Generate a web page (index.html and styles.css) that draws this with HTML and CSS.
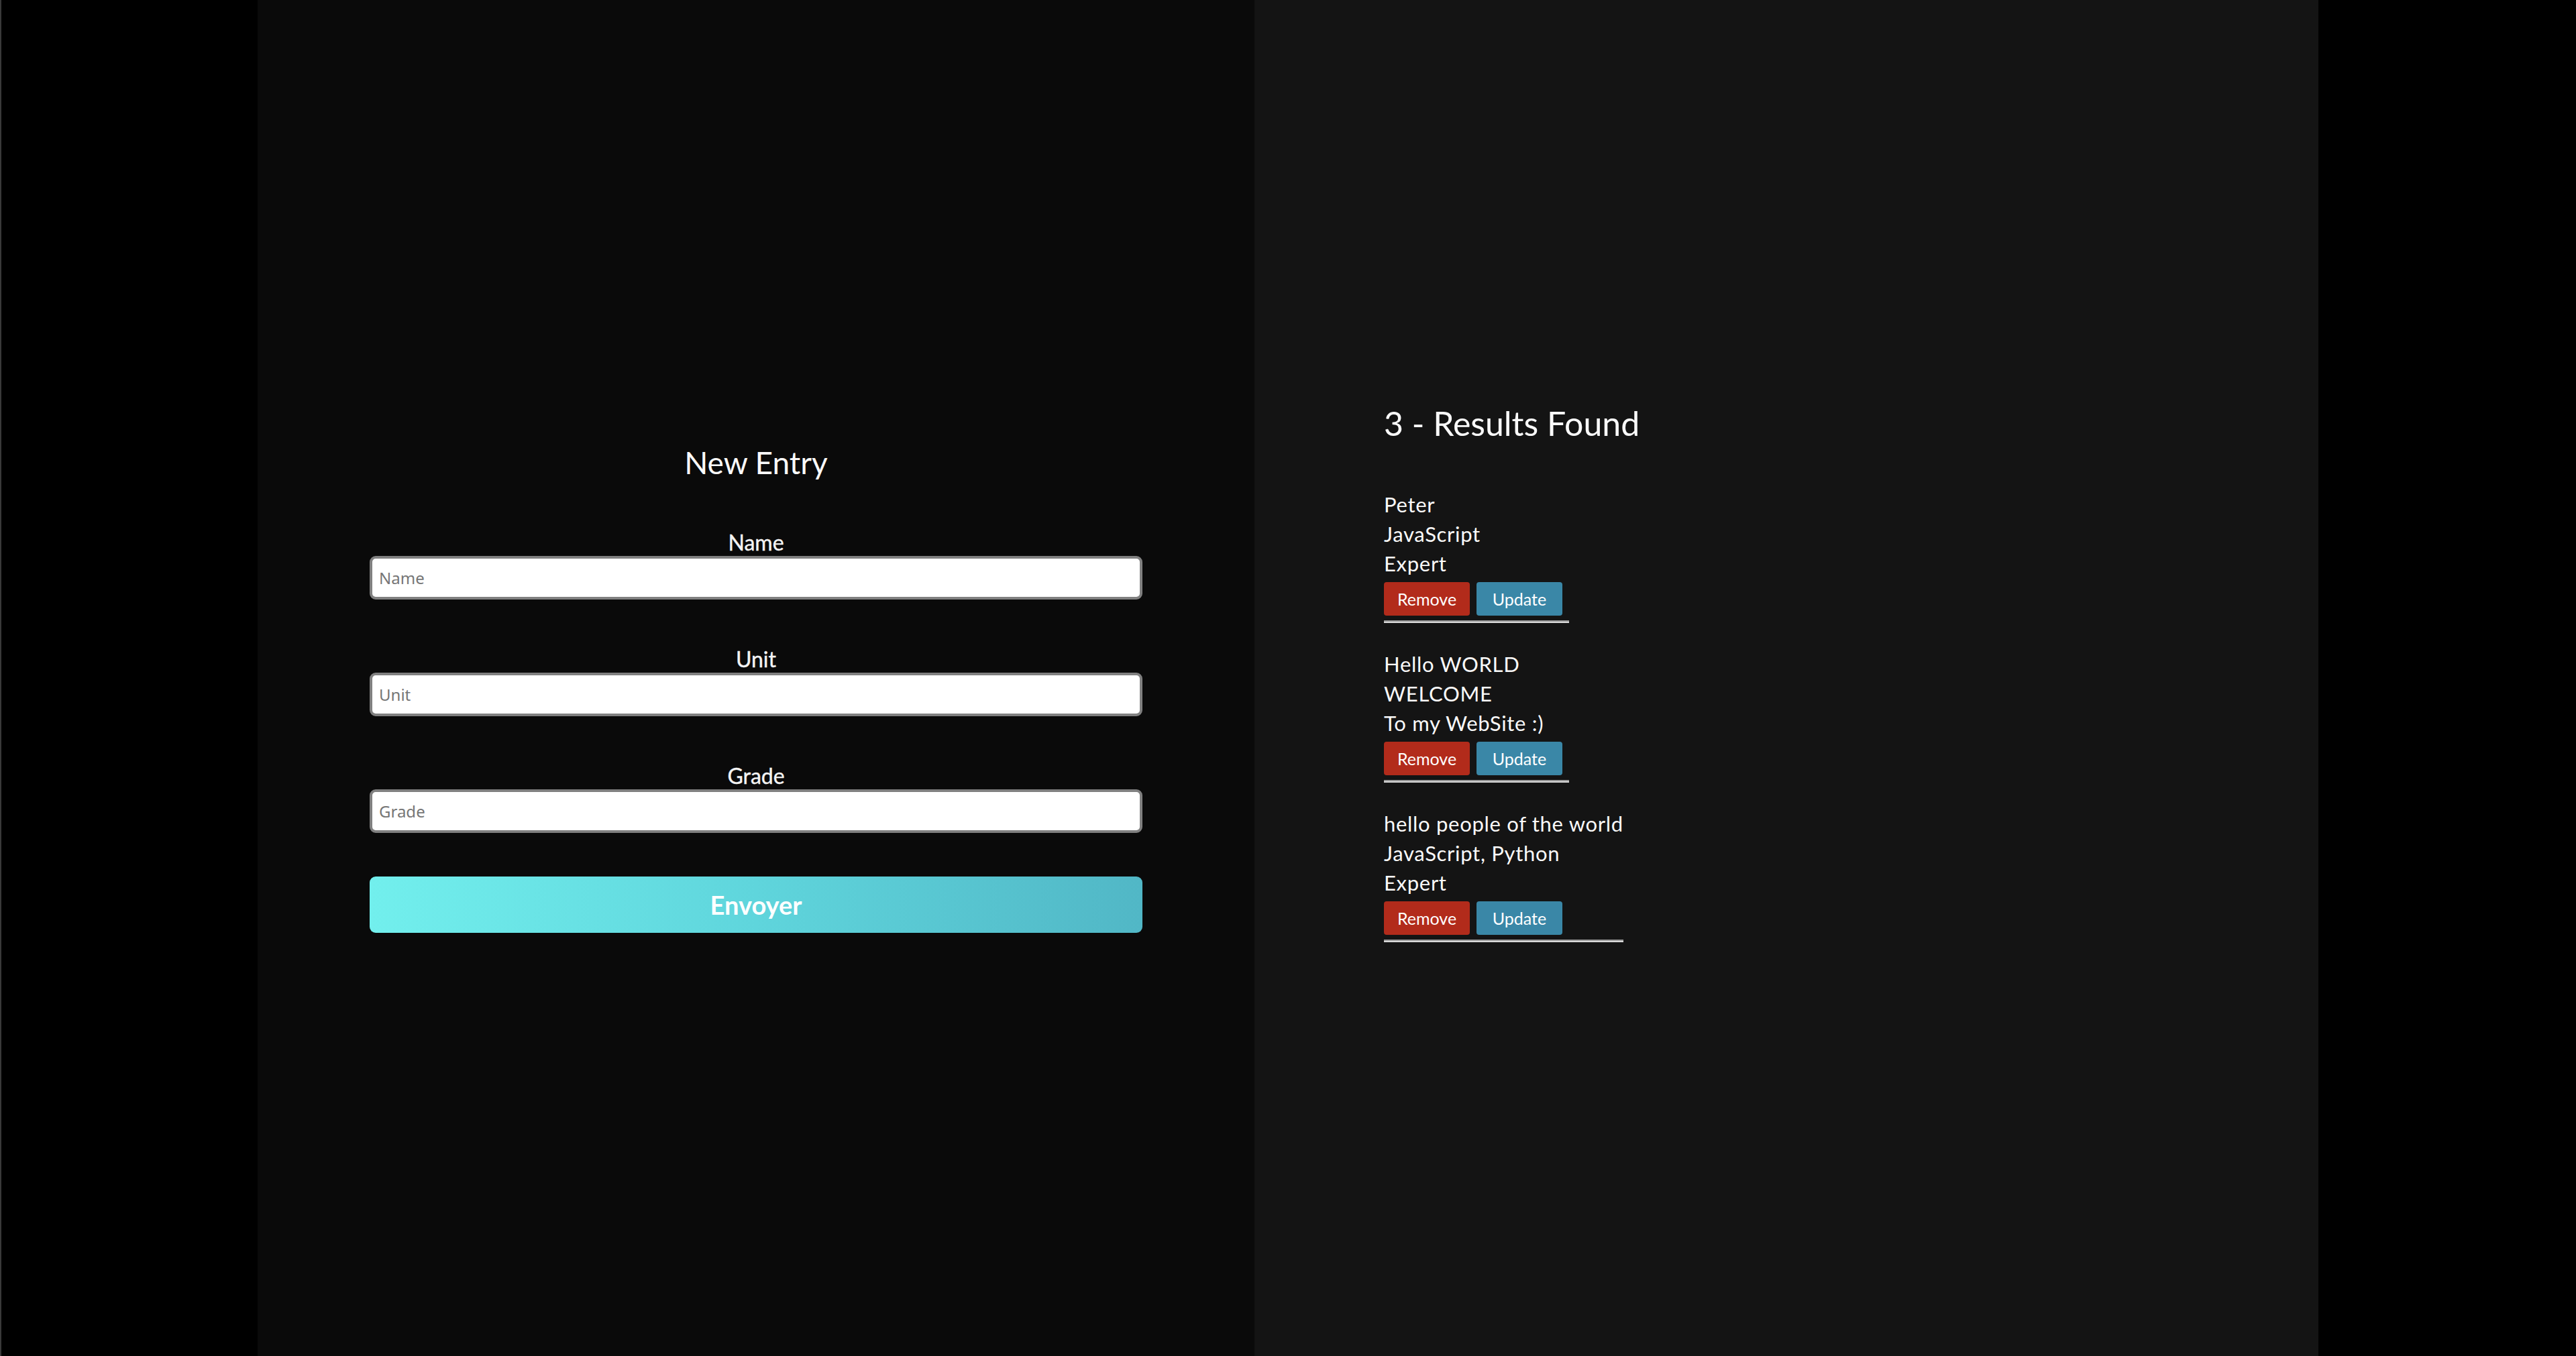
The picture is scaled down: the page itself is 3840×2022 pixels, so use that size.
FILE: index.html
```html
<!DOCTYPE html>
<html lang="en">
<head>
<meta charset="utf-8">
<title>Entries</title>
<link rel="stylesheet" href="styles.css">
</head>
<body>
<div class="page">
  <section class="panel panel-form">
    <h2 class="form-title">New Entry</h2>
    <form class="entry-form">
      <div class="field">
        <label class="field-label" for="name">Name</label>
        <input class="field-input" id="name" type="text" placeholder="Name">
      </div>
      <div class="field">
        <label class="field-label" for="unit">Unit</label>
        <input class="field-input" id="unit" type="text" placeholder="Unit">
      </div>
      <div class="field">
        <label class="field-label" for="grade">Grade</label>
        <input class="field-input" id="grade" type="text" placeholder="Grade">
      </div>
      <button class="submit-btn" type="button">Envoyer</button>
    </form>
  </section>
  <section class="panel panel-results">
    <h2 class="results-title">3 - Results Found</h2>
    <div class="results">
      <div class="item">
        <div class="item-line">Peter</div>
        <div class="item-line">JavaScript</div>
        <div class="item-line">Expert</div>
        <div class="item-actions">
          <button class="btn btn-remove" type="button">Remove</button><button class="btn btn-update" type="button">Update</button>
        </div>
      </div>
      <div class="item">
        <div class="item-line">Hello WORLD</div>
        <div class="item-line">WELCOME</div>
        <div class="item-line">To my WebSite :)</div>
        <div class="item-actions">
          <button class="btn btn-remove" type="button">Remove</button><button class="btn btn-update" type="button">Update</button>
        </div>
      </div>
      <div class="item">
        <div class="item-line">hello people of the world</div>
        <div class="item-line">JavaScript, Python</div>
        <div class="item-line">Expert</div>
        <div class="item-actions">
          <button class="btn btn-remove" type="button">Remove</button><button class="btn btn-update" type="button">Update</button>
        </div>
      </div>
    </div>
  </section>
</div>
</body>
</html>
```
FILE: styles.css
```css
html, body {
  margin: 0;
  padding: 0;
  background: #000;
}

body {
  font-family: "Lato", "Liberation Sans", sans-serif;
  color: #fff;
  border-left: 2px solid #393939;
  box-sizing: border-box;
  height: 2022px;
  overflow: hidden;
}

.page {
  display: flex;
  padding-left: 382px;
  height: 100%;
}

.panel {
  height: 100%;
  box-sizing: border-box;
}

.panel-form {
  width: 1486px;
  background: #0a0a0a;
  display: flex;
  flex-direction: column;
  align-items: center;
  padding-top: 662px;
}

.form-title {
  margin: 0;
  font-size: 46px;
  line-height: 55px;
  font-weight: 400;
  color: #fafafa;
}

.entry-form {
  width: 1152px;
  margin-top: 78px;
  display: flex;
  flex-direction: column;
}

.field {
  display: flex;
  flex-direction: column;
  align-items: center;
  margin-bottom: 75px;
}

.field:nth-child(3) {
  margin-bottom: 65px;
}

.field-label {
  font-size: 32px;
  line-height: 28px;
  font-weight: 400;
  color: #f4f4f4;
  margin-bottom: 6px;
  -webkit-text-stroke: 0.4px #f4f4f4;
}

.field-input {
  width: 100%;
  height: 65px;
  box-sizing: border-box;
  border: 4px solid #808080;
  border-radius: 9px;
  background: #fff;
  padding: 0 10px;
  font-family: "Noto Sans", "Lato", sans-serif;
  font-size: 24px;
  color: #222;
  outline: none;
}

.field-input::placeholder {
  color: #767676;
}

.submit-btn {
  width: 100%;
  height: 84px;
  border: none;
  border-radius: 9px;
  background: linear-gradient(90deg, #72efed 0%, #5fd5dc 50%, #51b7c6 100%);
  color: #fff;
  font-family: "Lato", sans-serif;
  font-weight: 700;
  font-size: 38px;
  padding: 0;
}

.panel-results {
  width: 1586px;
  background: #141414;
  padding-top: 601px;
  padding-left: 193px;
}

.results-title {
  margin: 0;
  font-size: 50px;
  line-height: 61px;
  font-weight: 400;
  color: #fafafa;
}

.results {
  margin-top: 68px;
  display: flex;
  flex-direction: column;
  align-items: flex-start;
  gap: 39px;
}

.item {
  display: flex;
  flex-direction: column;
  border-bottom: 2px solid #d9d9d9;
  box-shadow: inset 0 -2px 0 #9a9a9a;
  padding-bottom: 9px;
}

.item-line {
  font-size: 31px;
  line-height: 44px;
  letter-spacing: 0.7px;
  color: #fafafa;
  white-space: nowrap;
}

.item-actions {
  display: flex;
  margin-top: 6px;
}

.btn {
  width: 128px;
  height: 50px;
  margin-right: 10px;
  border: none;
  border-radius: 4px;
  color: #fff;
  font-family: "Lato", sans-serif;
  font-size: 25px;
  padding: 0;
}

.btn-remove {
  background: #b22b1b;
}

.btn-update {
  background: #3a87a7;
}
```
